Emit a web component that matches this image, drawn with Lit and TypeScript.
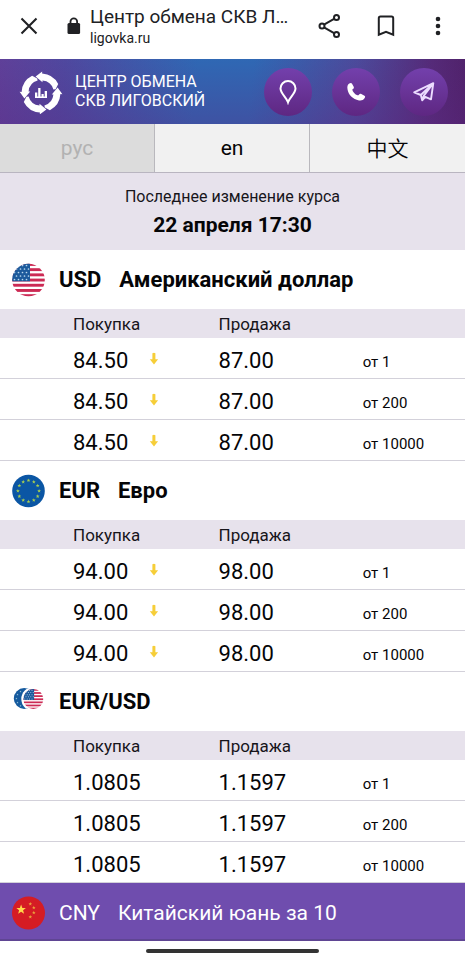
import { LitElement, html, svg, css, nothing, type TemplateResult } from "lit";
import { customElement, property, state } from "lit/decorators.js";
import { classMap } from "lit/directives/class-map.js";

interface Rate { buy: string; sell: string; from: string; down?: boolean }
interface Currency { id: string; code: string; name: string; rates: Rate[] }

const tiers = (buy: string, sell: string, down: boolean): Rate[] =>
  ["от 1", "от 200", "от 10000"].map((from) => ({ buy, sell, from, down }));

const CURRENCIES: Currency[] = [
  { id: "usd", code: "USD", name: "Американский доллар", rates: tiers("84.50", "87.00", true) },
  { id: "eur", code: "EUR", name: "Евро", rates: tiers("94.00", "98.00", true) },
  { id: "eurusd", code: "EUR/USD", name: "", rates: tiers("1.0805", "1.1597", false) },
];

const star = (cx: number, cy: number, r: number, fill: string) => {
  const pts = Array.from({ length: 10 }, (_, i) => {
    const a = (Math.PI / 5) * i - Math.PI / 2;
    const q = i % 2 ? r * 0.42 : r;
    return `${(cx + q * Math.cos(a)).toFixed(2)},${(cy + q * Math.sin(a)).toFixed(2)}`;
  }).join(" ");
  return svg`<polygon points=${pts} fill=${fill}></polygon>`;
};

/* A 34x34 American flag, clipped by its caller. */
const stripes = svg`
  <rect width="34" height="34" fill="#fff"></rect>
  ${[0, 1, 2, 3, 4, 5, 6].map((i) => svg`<rect y=${i * 5.2} width="34" height="2.9" fill="#cc2a54"></rect>`)}
  <rect width="18" height="18.3" fill="#1c5a9c"></rect>
  ${[0, 1, 2, 3, 4].map((r) => [0, 1, 2, 3].map((c) =>
    svg`<circle cx=${2.5 + c * 4 + (r % 2) * 2} cy=${2.5 + r * 3.5} r=".85" fill="#b9d8ee"></circle>`))}`;

const FLAGS: Record<string, TemplateResult> = {
  usd: html`<svg viewBox="0 0 34 34" aria-hidden="true">
    <defs><clipPath id="c"><circle cx="16.5" cy="17" r="16.3"></circle></clipPath></defs>
    <g clip-path="url(#c)">${stripes}</g></svg>`,
  eur: html`<svg viewBox="0 0 34 34" aria-hidden="true">
    <circle cx="16.5" cy="17" r="16.3" fill="#0b56a4"></circle>
    ${Array.from({ length: 12 }, (_, i) => {
      const a = (Math.PI / 6) * i;
      return star(16.5 + 10.6 * Math.sin(a), 17 - 10.6 * Math.cos(a), 2, "#a9cf4f");
    })}</svg>`,
  eurusd: html`<svg viewBox="0 0 34 34" aria-hidden="true">
    <defs>
      <clipPath id="a"><circle cx="12.2" cy="13.5" r="10.4"></circle></clipPath>
      <clipPath id="b"><circle cx="21.3" cy="14" r="10"></circle></clipPath>
    </defs>
    <g clip-path="url(#a)"><rect width="34" height="34" fill="#155a9e"></rect>
      ${[[8.5, 6.5], [5.5, 9.5], [4.4, 13.5], [5.5, 17.5], [8.5, 20.8]].map(([x, y]) => star(x, y, 1.1, "#9cc7d8"))}
      <circle cx="21.3" cy="14" r="12" fill="#fff"></circle></g>
    <g clip-path="url(#b)"><g transform="translate(11.3 4) scale(.6)">${stripes}</g></g></svg>`,
  cny: html`<svg viewBox="0 0 34 34" aria-hidden="true">
    <circle cx="16.5" cy="17" r="16.5" fill="#d51c24"></circle>
    ${star(9.1, 13.6, 5, "#ffd84a")}
    ${[[18.3, 8], [21.8, 11.6], [21.8, 16.6], [18.3, 20.9]].map(([x, y]) => star(x, y, 1.9, "#e9a23b"))}</svg>`,
};

const ARROW = html`<svg class="arrow" viewBox="0 0 10 14" role="img" aria-label="снижение">
  <path d="M3.4 1.2q1.6-.8 3 0v6.1h2.7L5 12.6.8 7.3h2.6z" fill="#f6ce38"></path></svg>`;

@customElement("rate-table")
export class RateTable extends LitElement {
  @property({ attribute: false }) currency!: Currency;

  static styles = css`
    :host { display: block; }
    .title { display: flex; align-items: center; height: 59px; margin: 0; padding: 0 12px; font-size: 22px; line-height: 28px; font-weight: 700; }
    .flag { width: 34px; height: 34px; margin-right: 13px; }
    .flag svg { display: block; }
    .name { margin-left: 18px; }
    table { width: 100%; border-collapse: separate; border-spacing: 0; table-layout: fixed; }
    th, td { box-sizing: border-box; padding: 0; text-align: left; font-weight: 400; }
    .buy { width: 47%; padding-left: 73px; }
    .sell { width: 31%; }
    th { height: 29px; background: #e7e2ec; font-size: 17px; color: #17151b; }
    td { height: 41px; border-bottom: 1px solid #d3d1da; font-size: 22px; line-height: 26px; padding-top: 5px; }
    .from { font-size: 15px; padding-top: 7px; }
    .price { display: flex; align-items: center; }
    .value { width: 76px; }
    .arrow { width: 10px; height: 14px; margin-bottom: 4px; }
  `;

  render() {
    const c = this.currency;
    return html`
      <h2 class="title"><span class="flag">${FLAGS[c.id]}</span><span>${c.code}</span>
        ${c.name ? html`<span class="name">${c.name}</span>` : nothing}</h2>
      <table aria-label=${c.code}>
        <thead><tr><th class="buy" scope="col">Покупка</th><th class="sell" scope="col">Продажа</th><th></th></tr></thead>
        <tbody>
          ${c.rates.map((r) => html`<tr>
            <td class="buy"><span class="price"><span class="value">${r.buy}</span>${r.down ? ARROW : nothing}</span></td>
            <td class="sell">${r.sell}</td>
            <td class="from">${r.from}</td>
          </tr>`)}
        </tbody>
      </table>`;
  }
}

@customElement("app-root")
export class AppRoot extends LitElement {
  @state() private lang = "рус";

  static styles = css`
    :host { display: block; min-height: 100vh; background: #fff; color: #050507;
      font-family: Roboto, "Noto Sans CJK SC", sans-serif; }
    button { border: 0; padding: 0; margin: 0; background: none; font: inherit; color: inherit; cursor: pointer; }
    svg { display: block; }

    .browser { display: flex; align-items: center; height: 59px; padding: 0 15px; color: #202124; }
    .tool { display: flex; align-items: center; justify-content: center; width: 28px; height: 28px; }
    .lock { width: 16px; margin: 0 8px 0 23px; }
    .page { flex: 1; min-width: 0; padding-bottom: 8px; }
    .page-title { font-size: 19px; line-height: 24px; white-space: nowrap; }
    .page-host { font-size: 14px; line-height: 18px; }
    .tools { display: flex; gap: 28px; margin: 0 2px 8px 24px; }
    .menu { width: 20px; }
    .close, .lock { margin-bottom: 8px; }

    .brand { display: flex; align-items: center; height: 65px; padding: 0 17px 0 18px; color: #fff;
      background:
        linear-gradient(rgba(92, 40, 130, 0), rgba(92, 40, 130, 0.34)),
        linear-gradient(95deg, #5f4099 0%, #4f489f 14%, #2f68b4 42%, #2f68b4 54%, #4c4a9b 76%, #552a78 92%, #4f2169 100%); }
    .logo { display: flex; align-items: center; gap: 11px; flex: 1; color: inherit; text-decoration: none;
      font-size: 16px; line-height: 19px; padding-bottom: 2px; }
    .contacts { display: flex; gap: 20px; }
    .round { display: flex; align-items: center; justify-content: center; width: 48px; height: 48px; border-radius: 50%;
      background: linear-gradient(#7340ac, #5e2782); }

    .langs { display: grid; grid-template-columns: repeat(3, 1fr); height: 49px; border-bottom: 1px solid #b9b5c0; box-sizing: border-box; }
    .lang { background: #f1f1f1; font-size: 21px; border-right: 1px solid #b9b8bd; }
    .lang:last-child { border-right: 0; font-weight: 350; padding-bottom: 3px; }
    .active { background: #dcdcdc; color: #b2b2b2; }

    .updated { height: 77px; box-sizing: border-box; padding-top: 12px; text-align: center; background: #e7e2ec; }
    .updated-label { margin: 0; font-size: 16px; line-height: 24px; color: #17151b; }
    .updated-time { display: block; font-size: 21px; line-height: 32px; font-weight: 700; }

    .more { display: flex; align-items: center; width: 100%; height: 58px; padding: 3px 12px 0; background: #6f4dae; color: #fff;
      font-size: 21px; border-bottom: 2px solid #5f4593; }
    .flag { width: 34px; height: 34px; margin-right: 13px; }
    .name { margin-left: 18px; }
    .bar { width: 37%; height: 4px; margin: 8px auto 0; border-radius: 2px; background: #333; }
  `;

  render() {
    return html`
      <div class="browser">
        <button class="tool close" aria-label="Закрыть"><svg width="18" height="18" viewBox="0 0 18 18">
          <path d="M1.5 1.5l15 15M16.5 1.5l-15 15" stroke="#202124" stroke-width="2.1"></path></svg></button>
        <span class="lock"><svg width="16" height="18" viewBox="0 0 16 18">
          <rect x="1.5" y="6" width="12.6" height="11" rx="1.5" fill="#202124"></rect>
          <path d="M4.5 7V4.6a3.3 3.3 0 0 1 6.6 0V7" fill="none" stroke="#202124" stroke-width="1.8"></path></svg></span>
        <div class="page">
          <div class="page-title">Центр обмена СКВ Л…</div>
          <div class="page-host">ligovka.ru</div>
        </div>
        <div class="tools">
          <button class="tool" aria-label="Поделиться"><svg width="24" height="26" viewBox="0 0 24 26" fill="none" stroke="#202124" stroke-width="2">
            <path d="M6 11.6l10.5-6M6 14.4l10.5 6"></path>
            <circle cx="4" cy="13" r="2.5"></circle><circle cx="18.5" cy="4.6" r="2.5"></circle><circle cx="18.5" cy="21.4" r="2.5"></circle></svg></button>
          <button class="tool" aria-label="В закладки"><svg width="18" height="22" viewBox="0 0 18 22" fill="none" stroke="#202124" stroke-width="2">
            <path d="M1.8 3.2q0-1.7 1.7-1.7h11q1.7 0 1.7 1.7v16.6L9 16.9l-7.2 2.9z"></path></svg></button>
          <button class="tool menu" aria-label="Меню"><svg width="6" height="20" viewBox="0 0 6 20" fill="#202124">
            <circle cx="3" cy="3" r="2.3"></circle><circle cx="3" cy="10" r="2.3"></circle><circle cx="3" cy="17" r="2.3"></circle></svg></button>
        </div>
      </div>

      <header class="brand">
        <a class="logo" href="#">
          <svg width="46" height="46" viewBox="-23 -25 46 46" aria-hidden="true" fill="#fff">
            ${[0, 90, 180, 270].map((a) => svg`<path transform="rotate(${a})"
              d="M-5.4-16.600L1.200-21.400 1.100-19.400A19.400 19.400 0 0 1 17.200-8.900L14.600-3.800 12.400-3.400A12.500 12.500 0 0 0 1.500-12.400L1.500-10.800z"></path>`)}
            <path d="M-6-.5h2.3v4h.9v-8.500h2.3v8.500h1V1h2.200v2.500h1V-2H6v7H-6z"></path>
          </svg>
          <span>ЦЕНТР ОБМЕНА<br>СКВ ЛИГОВСКИЙ</span>
        </a>
        <nav class="contacts">
          <button class="round" aria-label="Адрес"><svg width="20" height="26" viewBox="0 0 20 26" fill="none" stroke="#fff" stroke-width="2">
            <path d="M10 23.2C8.5 18.5 2.5 14.3 2.5 9.5a7.5 7.5 0 0 1 15 0c0 4.8-6 9-7.5 13.7z"></path></svg></button>
          <button class="round" aria-label="Телефон"><svg width="20" height="20" viewBox="0 0 20 20" fill="#fff">
            <path d="M3.2 1.6C4.3.8 5.3.7 5.9 1.6L7.7 4.7c.5 1 0 1.9-.9 2.4-.8.5-.4 1.300.2 2.300 1 1.600 2.200 2.700 3.900 3.600.9.5 1.500.5 2-.2.7-1 1.500-1.400 2.400-.9l3.200 1.800c.9.6.8 1.500 0 2.600-1.200 1.800-3 2.500-5.500 2.100C6.800 17.200 2.400 12.700 1.500 7.200c-.4-2.500 0-4.400 1.700-5.600z"></path></svg></button>
          <button class="round" aria-label="Telegram"><svg width="24" height="22" viewBox="0 0 24 22" fill="none" stroke="#ecdcff" stroke-width="1.9" stroke-linejoin="round">
            <path d="M2.2 11.3L21.3 2.2 19 18.4 13.3 15.9 10.2 19.3 8.8 14zM8.8 14L21.3 2.2 11.7 14.8 10.2 19.3"></path></svg></button>
        </nav>
      </header>

      <nav class="langs">
        ${["рус", "en", "中文"].map((l) => html`<button class=${classMap({ lang: true, active: l === this.lang })}
          aria-pressed=${l === this.lang} @click=${() => { this.lang = l; }}>${l}</button>`)}
      </nav>

      <main>
        <section class="updated">
          <p class="updated-label">Последнее изменение курса</p>
          <time class="updated-time">22 апреля 17:30</time>
        </section>
        ${CURRENCIES.map((c) => html`<rate-table .currency=${c}></rate-table>`)}
        <button class="more"><span class="flag">${FLAGS.cny}</span><span>CNY</span><span class="name">Китайский юань за 10</span></button>
      </main>
      <div class="bar"></div>`;
  }
}
